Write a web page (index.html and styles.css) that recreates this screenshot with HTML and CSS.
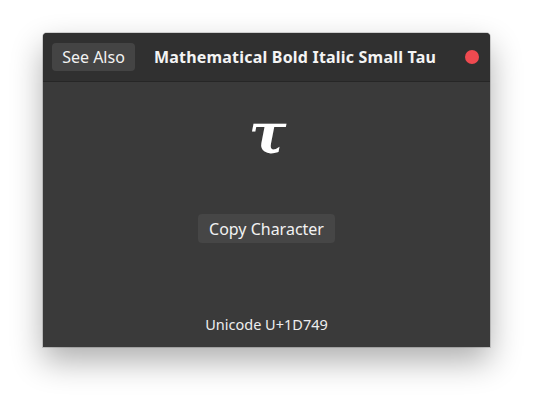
FILE: index.html
```html
<!DOCTYPE html>
<html>
<head>
<meta charset="utf-8">
<link rel="stylesheet" href="styles.css">
</head>
<body>
<div class="window">
  <header class="headerbar">
    <button class="btn see-also">See Also</button>
    <div class="title">Mathematical Bold Italic Small Tau</div>
    <span class="close"></span>
  </header>
  <main class="content">
    <div class="glyph">τ</div>
    <button class="btn copy">Copy Character</button>
    <div class="codepoint">Unicode U+1D749</div>
  </main>
</div>
</body>
</html>
```
FILE: styles.css
```css
html, body {
  margin: 0;
  padding: 0;
  background: #ffffff;
}
body {
  box-sizing: border-box;
  min-height: 400px;
  padding: 33px 0 0 43px;
  font-family: "Noto Sans", "Open Sans", sans-serif;
}
.window {
  width: 447px;
  height: 314px;
  background: #3a3a3a;
  border-radius: 4px 4px 0 0;
  box-shadow: 0 14px 32px rgba(0,0,0,0.32), 0 0 0 1px rgba(0,0,0,0.15);
  display: flex;
  flex-direction: column;
  overflow: hidden;
}
.headerbar {
  height: 48px;
  background: #303030;
  border-bottom: 1px solid #262626;
  display: flex;
  align-items: center;
  padding: 0 11px 0 9px;
  flex-shrink: 0;
}
.btn {
  font-family: inherit;
  color: #f2f2f2;
  background: #444444;
  border: none;
  border-radius: 4px;
  font-size: 16px;
  padding: 0;
  display: flex;
  align-items: center;
  justify-content: center;
  white-space: nowrap;
}
.see-also {
  width: 83px;
  height: 28px;
}
.title {
  flex: 1;
  text-align: center;
  color: #f4f4f4;
  font-weight: bold;
  font-size: 16px;
  letter-spacing: 0.2px;
  padding-right: 10px;
  white-space: nowrap;
}
.close {
  width: 14px;
  height: 14px;
  border-radius: 50%;
  background: #ef4a50;
}
.content {
  flex: 1;
  display: flex;
  flex-direction: column;
  align-items: center;
}
.glyph {
  margin-top: 11px;
  height: 80px;
  font-family: "DejaVu Serif", serif;
  font-weight: bold;
  font-style: italic;
  font-size: 56px;
  line-height: 80px;
  color: #ffffff;
  padding-left: 2px;
}
.copy {
  margin-top: 41px;
  width: 137px;
  height: 29px;
  background: #464646;
}
.codepoint {
  margin-top: auto;
  margin-bottom: 13px;
  font-size: 14.5px;
  color: #eeeeee;
}
```
